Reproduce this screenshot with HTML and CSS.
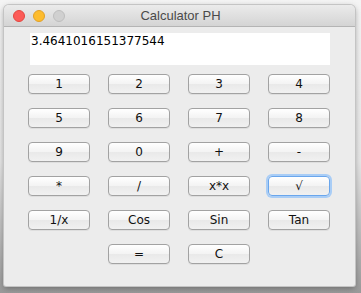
FILE: index.html
```
<!DOCTYPE html>
<html lang="en">
<head>
    <meta charset="UTF-8">
    <title>Calculator PH</title>
    <link rel="stylesheet" href="styles.css">
</head>
<body>
    <div class="window">
        <div class="titlebar">
            <div class="lights">
                <span class="light close"></span>
                <span class="light min"></span>
                <span class="light max"></span>
            </div>
            <span class="title">Calculator PH</span>
        </div>
        <div class="content">
            <div class="display">3.4641016151377544</div>
            <div class="keys">
                <button>1</button>
                <button>2</button>
                <button>3</button>
                <button>4</button>
                <button>5</button>
                <button>6</button>
                <button>7</button>
                <button>8</button>
                <button>9</button>
                <button>0</button>
                <button>+</button>
                <button>-</button>
                <button>*</button>
                <button>/</button>
                <button>x*x</button>
                <button class="focused">√</button>
                <button>1/x</button>
                <button>Cos</button>
                <button>Sin</button>
                <button>Tan</button>
                <button class="skip">=</button>
                <button>C</button>
            </div>
        </div>
    </div>
</body>
</html>
```

FILE: styles.css
```
html, body {
    margin: 0;
    height: 293px;
    overflow: hidden;
}
body {
    background: linear-gradient(#f4f4f4 0, #e6e6e6 55%, #9a9a9a 100%);
    padding: 5px 6px 0 4px;
    box-sizing: border-box;
}
.window {
    width: 351px;
    height: 281px;
    background-color: #ececec;
    border-radius: 5px 5px 2px 2px;
    box-shadow: 0 0 0 1px #c4c4c4, 0 2px 6px rgba(0, 0, 0, 0.35);
    overflow: hidden;
}
.titlebar {
    height: 21px;
    display: flex;
    align-items: center;
    position: relative;
    background: linear-gradient(#ebebeb, #d4d4d4);
    border-bottom: 1px solid #b4b4b4;
}
.lights {
    display: flex;
    gap: 8px;
    padding-left: 9px;
}
.light {
    width: 12px;
    height: 12px;
    border-radius: 50%;
    box-sizing: border-box;
}
.close {
    background-color: #fc5b57;
    border: 1px solid #e2463f;
}
.min {
    background-color: #fdbc2e;
    border: 1px solid #e0a028;
}
.max {
    background-color: #d0d0d0;
    border: 1px solid #bdbdbd;
}
.title {
    position: absolute;
    left: 0;
    right: 0;
    text-align: center;
    font-family: "Liberation Sans", Arial, sans-serif;
    font-size: 13px;
    color: #4a4a4a;
    padding-left: 2px;
}
.content {
    padding: 6px 0 0 24px;
}
.display {
    margin-left: 2px;
    width: 300px;
    height: 32px;
    box-sizing: border-box;
    background-color: #fff;
    padding: 1px 0 0 1px;
    font-family: "DejaVu Sans", sans-serif;
    font-size: 12px;
    color: #000;
}
.keys {
    margin-top: 9px;
    display: grid;
    grid-template-columns: repeat(4, 62px);
    grid-auto-rows: 20px;
    column-gap: 18px;
    row-gap: 14px;
}
button {
    font-family: "DejaVu Sans", sans-serif;
    font-size: 12px;
    color: #111;
    padding: 0;
    border: 1px solid #a2a2a2;
    border-radius: 4px;
    background: linear-gradient(#ffffff, #f3f3f3 50%, #e9e9e9 51%, #f1f1f1);
    box-shadow: 0 1px 0 rgba(0, 0, 0, 0.06);
}
button.focused {
    border: 1px solid #6aa6ec;
    box-shadow: 0 0 0 2px #a9cdf6;
}
.skip {
    grid-column: 2;
}
```
